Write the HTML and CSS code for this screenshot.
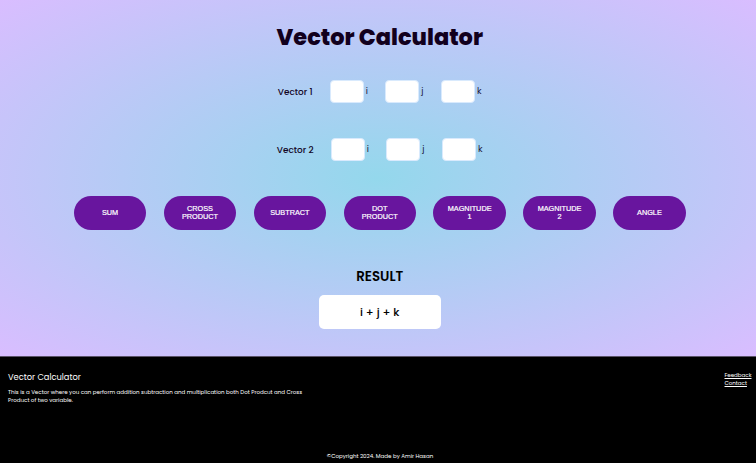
FILE: index.html
```html
<!DOCTYPE html>
<html lang="en">
<head>
<meta charset="utf-8">
<title>Vector Calculator</title>
<link rel="stylesheet" href="styles.css">
</head>
<body>
<main class="calculator">
  <h1 class="title">Vector Calculator</h1>
  <div class="vector">
    <span class="vector-name">Vector 1</span>
    <label class="component"><input class="field" type="text"><span>i</span></label>
    <label class="component"><input class="field" type="text"><span>j</span></label>
    <label class="component"><input class="field" type="text"><span>k</span></label>
  </div>
  <div class="vector vector-second">
    <span class="vector-name">Vector 2</span>
    <label class="component"><input class="field" type="text"><span>i</span></label>
    <label class="component"><input class="field" type="text"><span>j</span></label>
    <label class="component"><input class="field" type="text"><span>k</span></label>
  </div>
  <div class="operations">
    <button class="operation">SUM</button>
    <button class="operation">CROSS<br>PRODUCT</button>
    <button class="operation">SUBTRACT</button>
    <button class="operation">DOT<br>PRODUCT</button>
    <button class="operation">MAGNITUDE<br>1</button>
    <button class="operation">MAGNITUDE<br>2</button>
    <button class="operation">ANGLE</button>
  </div>
  <h2 class="result-title">RESULT</h2>
  <div class="result">i + j + k</div>
</main>
<footer class="footer">
  <div class="footer-top">
    <div>
      <h3 class="footer-title">Vector Calculator</h3>
      <p class="about">This is a Vector where you can perform addition subtraction and multiplication both Dot Prodcut and Cross<br>Product of two variable.</p>
    </div>
    <nav class="links"><a href="#">Feedback</a><a href="#">Contact</a></nav>
  </div>
  <p class="copyright">©Copyright 2024. Made by Amir Hasan</p>
</footer>
</body>
</html>
```
FILE: styles.css
```css
* { box-sizing: border-box; margin: 0; padding: 0; }
body {
  width: 756px;
  height: 463px;
  overflow: hidden;
  font-family: Poppins, Inter, sans-serif;
  color: #12051f;
}
.calculator {
  height: 356px;
  padding: 20px 0 0 3.5px;
  display: flex;
  flex-direction: column;
  align-items: center;
  background: radial-gradient(#94d8ec, #d9bdff);
}
.title {
  height: 34px;
  line-height: 34px;
  font-size: 22.45px;
  font-weight: 800;
  color: #12001d;
  white-space: nowrap;
}
.vector {
  display: flex;
  width: 204px;
  height: 23px;
  margin-top: 26px;
  font-size: 8.9px;
  line-height: 24px;
}
.vector-second { width: 206px; margin-top: 35px; }
.vector-name { width: 52px; flex-shrink: 0; font-weight: 500; white-space: nowrap; }
.vector-second .vector-name { width: 54px; }
.component { display: flex; width: 55.6px; gap: 2px; flex-shrink: 0; line-height: 22px; color: #1d1638; }
.field {
  width: 34px;
  height: 23px;
  border: 1px solid #d9eafd;
  border-radius: 4px;
  background: #fff;
}
.operations { display: flex; gap: 17.5px; margin-top: 35px; }
.operation {
  width: 72.4px;
  height: 33.5px;
  border: 0;
  border-radius: 17px;
  background: #68159e;
  color: #fff;
  font: 500 7.3px/8px "Liberation Sans", Arial, sans-serif;
  -webkit-text-stroke: 0.2px #fff;
}
.result-title {
  height: 20px;
  margin-top: 37px;
  font-size: 13.4px;
  line-height: 20px;
  font-weight: 600;
  color: #000;
}
.result {
  width: 122px;
  height: 33.5px;
  margin-top: 8.5px;
  border-radius: 5px;
  background: #fff;
  color: #000;
  font-size: 11.1px;
  font-weight: 500;
  line-height: 34px;
  text-align: center;
}
.footer {
  height: 107px;
  padding: 13px 4px 0 8px;
  display: flex;
  flex-direction: column;
  border-top: 1px solid #5b5368;
  background: #000;
  color: #fff;
}
.footer-top { display: flex; justify-content: space-between; }
.footer-title { font-size: 8.3px; line-height: 14px; font-weight: 400; }
.about { margin-top: 4px; font-size: 5.53px; line-height: 8px; white-space: nowrap; }
.links { display: flex; flex-direction: column; align-items: flex-start; width: 27.5px; padding-top: 1px; font-size: 5.53px; line-height: 8px; }
.links a { color: #fff; }
.copyright { margin: auto 0 2px; padding-left: 0; text-align: center; font-size: 5.53px; line-height: 9px; }
```
